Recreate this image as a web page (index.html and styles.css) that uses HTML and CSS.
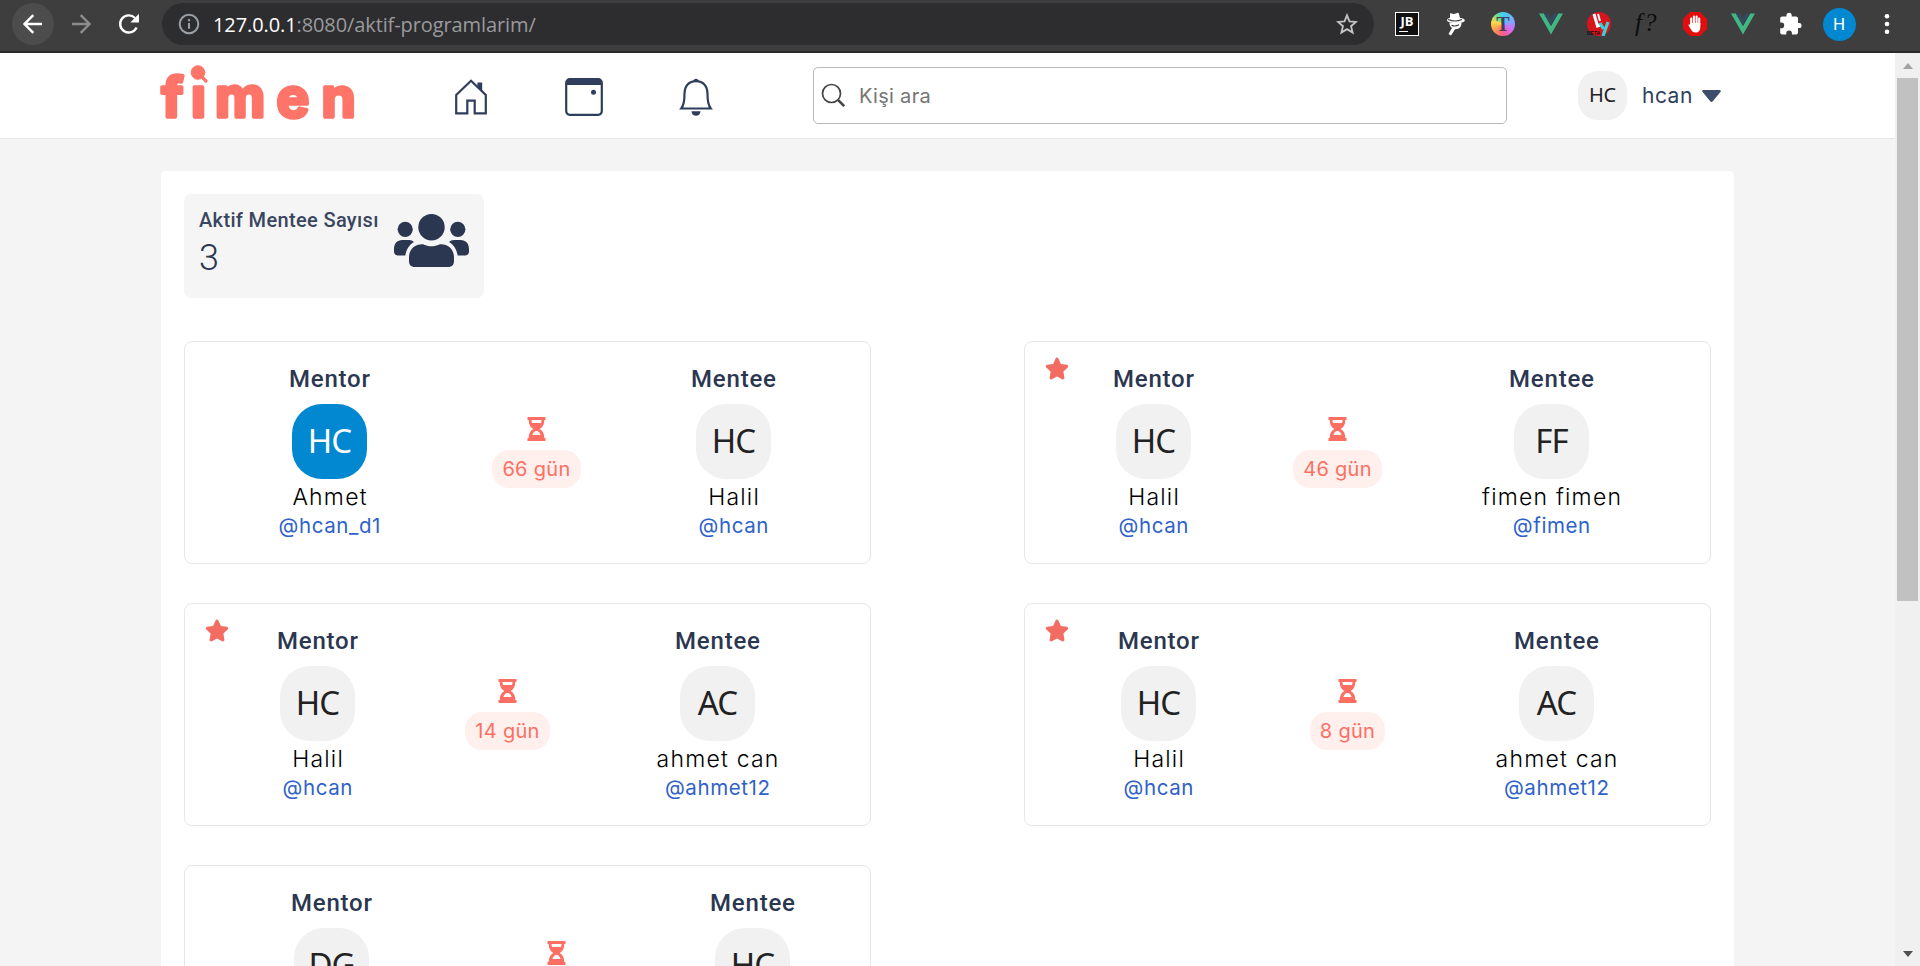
FILE: index.html
```html
<!DOCTYPE html>
<html lang="tr">
<head>
<meta charset="utf-8">
<title>fimen</title>
<link rel="stylesheet" href="styles.css">
</head>
<body>
<svg class="sprite" aria-hidden="true">
  <symbol id="vue" viewBox="0 0 24 24"><path fill="#41b883" d="M0 1.5h4.8L12 14l7.200-12.500H24L12 22.500z"/><path fill="#35495e" d="M4.800 1.500h4.500L12 6.200l2.700-4.700h4.500L12 14z"/></symbol>
  <symbol id="star" viewBox="0 0 24 23"><path d="M12 .6c.6 0 1.100.3 1.400.9l2.500 5.400 5.900.8c1.400.2 1.900 1.800.9 2.800l-4.300 4.100 1 5.900c.3 1.400-1.100 2.300-2.300 1.700L12 19.400l-5.100 2.800c-1.200.6-2.600-.3-2.300-1.700l1-5.900-4.300-4.100c-1-1-.5-2.600.9-2.800l5.900-.8 2.500-5.400c.3-.6.800-.9 1.400-.9z"/></symbol>
  <symbol id="hourglass" viewBox="0 0 18 24"><path fill-rule="evenodd" d="M0 0h18v3h-1.200c0 4.500-1.600 7.400-4.600 9 3 1.600 4.600 4.500 4.600 9H18v3H0v-3h1.200c0-4.500 1.600-7.400 4.600-9C2.800 10.400 1.200 7.500 1.200 3H0zM4 3c0 1.200.2 2.200.5 3.100h9c.3-.9.5-1.900.5-3.100zM4.900 18h8.200c-.6-2.200-1.900-4-4.100-4s-3.500 1.800-4.100 4z"/></symbol>
</svg>

<div class="browser">
  <span class="nav-btn nav-btn--active"><svg width="20" height="20" viewBox="0 0 20 20"><path d="M19 10H2M10.300 1.200 1.500 10l8.800 8.800"/></svg></span>
  <span class="nav-btn nav-btn--off"><svg width="20" height="20" viewBox="0 0 20 20"><path d="M1 10h17M9.700 1.200l8.800 8.800-8.800 8.800"/></svg></span>
  <span class="nav-btn nav-btn--reload"><svg width="22" height="22" viewBox="0 0 22 22"><path d="M18.600 14.500A8.600 8.600 0 1 1 17 5"/><path class="solid" d="M21 .8v8.700h-8.700z"/></svg></span>
  <div class="omnibox">
    <svg class="info" width="22" height="22" viewBox="0 0 22 22"><circle cx="11" cy="11" r="9.300"/><path d="M11 10v5.800M11 6v2.200"/></svg>
    <span class="url"><b>127.0.0.1</b>:8080/aktif-programlarim/</span>
    <svg class="bookmark" width="22" height="22" viewBox="0 0 24 24"><path d="m12 2.500 2.700 6.600 7.100.6-5.400 4.700 1.700 7L12 17.600l-6.100 3.800 1.700-7L2.200 9.700l7.100-.6z"/></svg>
  </div>
  <div class="extensions">
    <span class="ext ext-jb">JB</span>
    <svg class="ext" viewBox="0 0 24 24" fill="#fff"><path d="M7 1.200 11 2l4-1.200c1 0 1.500 3 1.800 5 3 .5 5 1.500 5 2.500 0 2-4 3-8.500 3S4 10.200 4 8.300c0-1.200 1-2 3-2.500z"/><path d="M6.500 11h12c0 4-2.500 6.500-6.500 6.200l-4 6.300-2.500-1.600L9 16c-1.600-1-2.500-2.800-2.500-5z"/><path stroke="#3e3e3e" stroke-width="1.200" fill="none" d="M5 7.500c4 1.700 10 1.700 14 0M8.500 13.200c2 1 5 1 7.500-.4"/></svg>
    <span class="ext ext-t">T</span>
    <svg class="ext"><use href="#vue"/></svg>
    <span class="ext ext-ly"><svg viewBox="0 0 24 24"><circle cx="12" cy="12" r="12" fill="#d8141c"/><path d="m7 2 3.500 12 4-1.500" fill="none" stroke="#fff" stroke-width="3"/><path d="m11 2 2 7" stroke="#fff" stroke-width="2"/><path d="m13 11 3.500 6M21 10l-5 14" fill="none" stroke="#38d3d8" stroke-width="3.200"/></svg><b>BETA</b></span>
    <span class="ext ext-f">f?</span>
    <svg class="ext" viewBox="0 0 24 24"><path fill="#e40d0d" d="M7 0h10l7 7v10l-7 7H7l-7-7V7z"/><path d="M8.200 13V6.500M10.900 12V4.500M13.600 12V4.500M16.200 13V6.500" stroke="#fff" stroke-width="2.100" stroke-linecap="round"/><path fill="#fff" d="M7.200 11h10.100v4.500c0 3-1.800 5-4.500 5-2.500 0-3.800-1-5-3.200L5.300 13c.9-1 1.900-.3 2.600.8z"/></svg>
    <svg class="ext"><use href="#vue"/></svg>
    <svg class="ext" viewBox="0 0 24 24" fill="#fff"><path d="M20 11h-1V6.500C19 5.400 18.100 4.500 17 4.500h-4.300V3.300a2.600 2.600 0 0 0-5.200 0v1.200H3.200c-1.100 0-2 .9-2 2v4.100h1.200a2.800 2.800 0 0 1 0 5.600H1.200v4.300c0 1.100.9 2 2 2h4.100v-1.200a2.800 2.800 0 0 1 5.600 0v1.200H17c1.100 0 2-.9 2-2V16h1.200a2.500 2.500 0 0 0-.2-5z"/></svg>
    <span class="ext profile">H</span>
    <svg class="ext" viewBox="0 0 24 24" fill="#fff"><circle cx="12" cy="4.300" r="2.300"/><circle cx="12" cy="12" r="2.300"/><circle cx="12" cy="19.700" r="2.300"/></svg>
  </div>
</div>

<div class="viewport">
  <div class="page">
    <header class="topbar">
      <svg class="logo" width="200" height="58" viewBox="0 0 200 58" role="img" aria-label="fimen">
        <text class="logo-text" x="2.500 32 56 117.500 162.500" y="53">fımen</text>
        <circle cx="39" cy="8.500" r="6.800"/><path d="m42 12 5 5" stroke-width="3.200"/>
      </svg>
      <nav class="menu">
        <svg width="34" height="38" viewBox="0 0 34 38"><path d="M2.200 17 17 2.800 31.800 17v18.400H20.700V22.600h-7.400v12.800H2.200z"/><path class="fill" d="M23.400 4.500h4.800v9.300l-4.800-4.600z"/></svg>
        <svg width="38" height="38" viewBox="0 0 38 38"><rect x="1.200" y="1.200" width="35.600" height="35.600" rx="3.500"/><path class="fill" d="M1 7V4.500Q1 1 4.500 1h29Q37 1 37 4.500V7z"/><circle class="fill" cx="28.500" cy="14.200" r="2.500"/></svg>
        <svg width="34" height="38" viewBox="0 0 34 38"><path d="M2.300 30.500c2.500-3.300 3.200-8 3.200-14.500C5.500 8 10 3.200 17 3.200S28.500 8 28.500 16c0 6.500.7 11.200 3.200 14.500z"/><path class="fill" d="M12.500 33.200h9c0 6-9 6-9 0zM14.500 3.500a2.500 2.800 0 0 1 5 0z"/></svg>
      </nav>
      <div class="search">
        <svg width="25" height="25" viewBox="0 0 25 25"><circle cx="10.500" cy="10.500" r="9"/><path d="m17.200 17.200 6 6" stroke-width="2.600"/></svg>
        <span>Kişi ara</span>
      </div>
      <div class="user">
        <span class="avatar avatar--sm">HC</span>
        <span class="user-name">hcan</span>
        <svg width="19" height="12" viewBox="0 0 19 12"><path d="M1.500 0h16c1.200 0 1.700 1.200.9 2.100l-7.600 9.200c-.7.900-1.900.9-2.600 0L.6 2.100C-.2 1.200.3 0 1.500 0z"/></svg>
      </div>
    </header>

    <main class="panel">
      <section class="stat">
        <div><h2>Aktif Mentee Sayısı</h2><p>3</p></div>
        <svg width="75" height="53" viewBox="0 0 75 53"><circle cx="37.500" cy="13.200" r="13.200"/><circle cx="11.200" cy="15.300" r="7.600"/><circle cx="63.800" cy="15.300" r="7.600"/><path d="M15 47V43.500C15 35 21 30.200 28 30.200c2.500 0 4 2 9.500 2s7-2 9.500-2c7 0 13 4.800 13 13.300V47c0 3.700-2 6-5.800 6H20.800C17 53 15 50.700 15 47zM0 35.500C0 29.500 3 26 8.500 26H15c2 0 3.700.7 5 2-4.500 2.500-7.500 7-8.700 13.500H4.500C1.500 41.500 0 40 0 37.500zM75 35.500C75 29.500 72 26 66.500 26H60c-2 0-3.700.7-5 2 4.500 2.500 7.500 7 8.700 13.500h6.800c3 0 4.500-1.500 4.500-4z"/></svg>
      </section>

      <section class="programs">
        <article class="card card--a">
          <div class="person"><h3>Mentor</h3><span class="avatar avatar--blue">HC</span><p>Ahmet</p><a>@hcan_d1</a></div>
          <div class="time"><svg><use href="#hourglass"/></svg><span>66 gün</span></div>
          <div class="person"><h3>Mentee</h3><span class="avatar">HC</span><p>Halil</p><a>@hcan</a></div>
        </article>
        <article class="card card--b">
          <svg class="badge"><use href="#star"/></svg>
          <div class="person"><h3>Mentor</h3><span class="avatar">HC</span><p>Halil</p><a>@hcan</a></div>
          <div class="time"><svg><use href="#hourglass"/></svg><span>46 gün</span></div>
          <div class="person"><h3>Mentee</h3><span class="avatar">FF</span><p>fimen fimen</p><a>@fimen</a></div>
        </article>
        <article class="card card--c">
          <svg class="badge"><use href="#star"/></svg>
          <div class="person"><h3>Mentor</h3><span class="avatar">HC</span><p>Halil</p><a>@hcan</a></div>
          <div class="time"><svg><use href="#hourglass"/></svg><span>14 gün</span></div>
          <div class="person"><h3>Mentee</h3><span class="avatar">AC</span><p>ahmet can</p><a>@ahmet12</a></div>
        </article>
        <article class="card card--d">
          <svg class="badge"><use href="#star"/></svg>
          <div class="person"><h3>Mentor</h3><span class="avatar">HC</span><p>Halil</p><a>@hcan</a></div>
          <div class="time"><svg><use href="#hourglass"/></svg><span>8 gün</span></div>
          <div class="person"><h3>Mentee</h3><span class="avatar">AC</span><p>ahmet can</p><a>@ahmet12</a></div>
        </article>
        <article class="card card--e">
          <div class="person"><h3>Mentor</h3><span class="avatar">DG</span></div>
          <div class="time"><svg><use href="#hourglass"/></svg></div>
          <div class="person"><h3>Mentee</h3><span class="avatar">HC</span></div>
        </article>
      </section>
    </main>
  </div>
  <div class="scrollbar"><i class="up"></i><i class="thumb"></i><i class="down"></i></div>
</div>
</body>
</html>
```

FILE: styles.css
```css
* { box-sizing: border-box; }
html, body { margin: 0; height: 966px; overflow: hidden; }
body { display: flex; flex-direction: column; font-family: Inter, "Open Sans", sans-serif; background: #f4f4f4; }
h2, h3, p { margin: 0; }
svg { flex: none; display: block; }
.sprite { position: absolute; width: 0; height: 0; }

/* browser toolbar */
.browser { flex: none; height: 53px; padding: 0 0 3px 12px; display: flex; align-items: center; background: #3e3e3e; border-bottom: 2px solid #29292b; }
.nav-btn { width: 42px; height: 42px; margin-right: 6px; border-radius: 50%; display: grid; place-items: center; }
.nav-btn svg { fill: none; stroke: #fff; stroke-width: 2.4; }
.nav-btn .solid { fill: #fff; stroke: none; }
.nav-btn--active { background: #4c4c4c; }
.nav-btn--off svg { stroke: #8c8c8c; }
.nav-btn--reload { margin-right: 12px; }
.omnibox { width: 1212px; height: 42px; padding: 0 16px; border-radius: 21px; background: #2d2d30; display: flex; align-items: center; }
.info { fill: none; stroke: #9aa0a6; stroke-width: 2; }
.url { flex: 1; margin-left: 13px; font: 20px "Open Sans", sans-serif; letter-spacing: -.1px; color: #9a9a9c; }
.url b { font-weight: 400; color: #fff; }
.bookmark { fill: none; stroke: #c4c4c6; stroke-width: 2; }
.extensions { display: flex; align-items: center; gap: 24px; margin-left: 21px; }
.ext { position: relative; width: 24px; height: 24px; }
.ext svg { width: 24px; height: 24px; }
.ext-jb { border: 1.500px solid #fff; background: #101010; color: #fff; font: 700 13px/16px "Open Sans", sans-serif; text-align: center; }
.ext-jb::after { content: ""; position: absolute; left: 3px; bottom: 3px; width: 9px; height: 1.500px; background: #fff; }
.ext-t { border-radius: 50%; background: conic-gradient(#3fd0f5, #7fa8ff 20%, #d66bf0 35%, #ff5a8a 50%, #ff9a4d 65%, #ffd94d 78%, #6fdc8c 90%, #3fd0f5); text-align: center; font: 700 20px/24px "Liberation Serif", serif; color: #3d4450; }
.ext-ly b { position: absolute; left: 0; bottom: 0; font: 700 5px/6px "Liberation Sans", sans-serif; color: #111; }
.ext-f { font: italic 25px/22px "Liberation Serif", serif; letter-spacing: 2px; color: #0c0c0c; white-space: nowrap; }
.ext.profile { width: 33px; height: 33px; margin: 0 -4.500px; border-radius: 50%; background: #0288d1; color: #fff; font: 17px/33px Roboto, sans-serif; text-align: center; }

/* page */
.viewport { flex: 1; min-height: 0; display: flex; }
.page { flex: 1; height: 913px; overflow: hidden; }
.topbar { height: 86px; padding-left: 159px; display: flex; align-items: flex-start; background: #fff; border-bottom: 1px solid #e8e8e8; }
.logo { margin-top: 11px; overflow: visible; fill: #ff7469; stroke: #ff7469; stroke-linecap: round; }
.logo-text { font: 700 55px Inter, sans-serif; stroke-width: 3.600px; stroke-linejoin: round; }
.menu { display: flex; justify-content: space-between; width: 259px; margin: 25px 0 0 95px; fill: none; stroke: #2f3e5c; stroke-width: 2.2; }
.menu .fill { fill: #2f3e5c; stroke: none; }
.search { width: 694px; height: 57px; margin: 14px 0 0 100px; padding-left: 7px; display: flex; align-items: center; gap: 13px; border: 1px solid #b9b9b9; border-radius: 5px; font-size: 20px; letter-spacing: .3px; color: #757575; }
.search svg { fill: none; stroke: #444; stroke-width: 1.7; }
.user { display: flex; align-items: center; margin: 18px 0 0 71px; color: #2f3e5c; font-size: 21px; letter-spacing: .5px; }
.user-name { width: 54px; margin: 0 6px 0 15px; }
.user svg { fill: #3d4d6c; }

.panel { width: 1573px; height: 900px; margin: 32px 0 0 161px; padding: 23px; background: #fff; border-radius: 5px; }
.stat { width: 300px; height: 104px; padding: 15px; display: flex; justify-content: space-between; background: #f5f5f5; border-radius: 7px; color: #2b3750; fill: #2b3750; }
.stat svg { margin-top: 5px; }
.stat h2 { font: 500 20px/24px Roboto, sans-serif; letter-spacing: .35px; margin-top: -1px; color: #3a4560; white-space: nowrap; }
.stat p { font: 350 36px/42px Roboto, sans-serif; margin-top: 5px; }

.programs { margin-top: 43px; display: grid; grid-template-columns: 687px 687px; justify-content: space-between; row-gap: 39px; }
.card { position: relative; height: 223px; border: 1px solid #e7e7e7; border-radius: 8px; display: flex; }
.card--a { padding-left: 69.500px; --g1: 82px; --g2: 72px; }
.card--b { padding-left: 53.500px; --g1: 59px; --g2: 89px; }
.card--c { padding-left: 57.500px; --g1: 65px; --g2: 85px; }
.card--d { padding-left: 58.500px; --g1: 64px; --g2: 84px; }
.card--e { padding-left: 71.500px; --g1: 99.500px; --g2: 71.500px; }
.badge { position: absolute; left: 20px; top: 15px; width: 24px; height: 23px; fill: #f36c62; }
.person { width: 150px; padding-top: 21px; display: flex; flex-direction: column; align-items: center; white-space: nowrap; }
.person h3 { font: 500 24px/32px Roboto, sans-serif; letter-spacing: .8px; margin-right: -.8px; color: #2b3750; }
.avatar { width: 75px; height: 75px; margin-top: 9px; border-radius: 30px; background: #f1f1f1; color: #222; font: 400 33px/73px "Noto Sans", sans-serif; letter-spacing: -1px; text-align: center; }
.avatar--blue { background: #0288d1; color: #fff; }
.avatar--sm { width: 49px; height: 49px; margin: 0; border-radius: 20px; font-size: 20px; line-height: 48px; letter-spacing: -.3px; }
.person p { margin-top: 3px; font-size: 23px; line-height: 30px; font-weight: 300; letter-spacing: 1.200px; margin-right: -1.200px; color: #000; }
.person a { font-size: 20.500px; line-height: 27px; letter-spacing: .6px; margin-right: -.6px; color: #2f62c9; }
.time { width: 100px; margin: 0 var(--g2) 0 var(--g1); padding-top: 75px; display: flex; flex-direction: column; align-items: center; }
.time svg { width: 19px; height: 24px; fill: #fd6e63; }
.time span { margin-top: 9px; padding: 0 10px; height: 38px; border-radius: 17px; background: #fff0ed; color: #fc6f63; font-size: 20px; line-height: 38px; letter-spacing: .3px; white-space: nowrap; }

.scrollbar { width: 25px; background: #f0f0f0; display: flex; flex-direction: column; align-items: center; padding: 10px 0 9px; }
.up { border: 5.500px solid transparent; border-top: 0; border-bottom: 6px solid #a3a3a3; }
.thumb { width: 21px; height: 523px; margin-top: 9px; background: #c1c1c1; }
.down { margin-top: auto; border: 5.500px solid transparent; border-bottom: 0; border-top: 6px solid #505050; }
```
